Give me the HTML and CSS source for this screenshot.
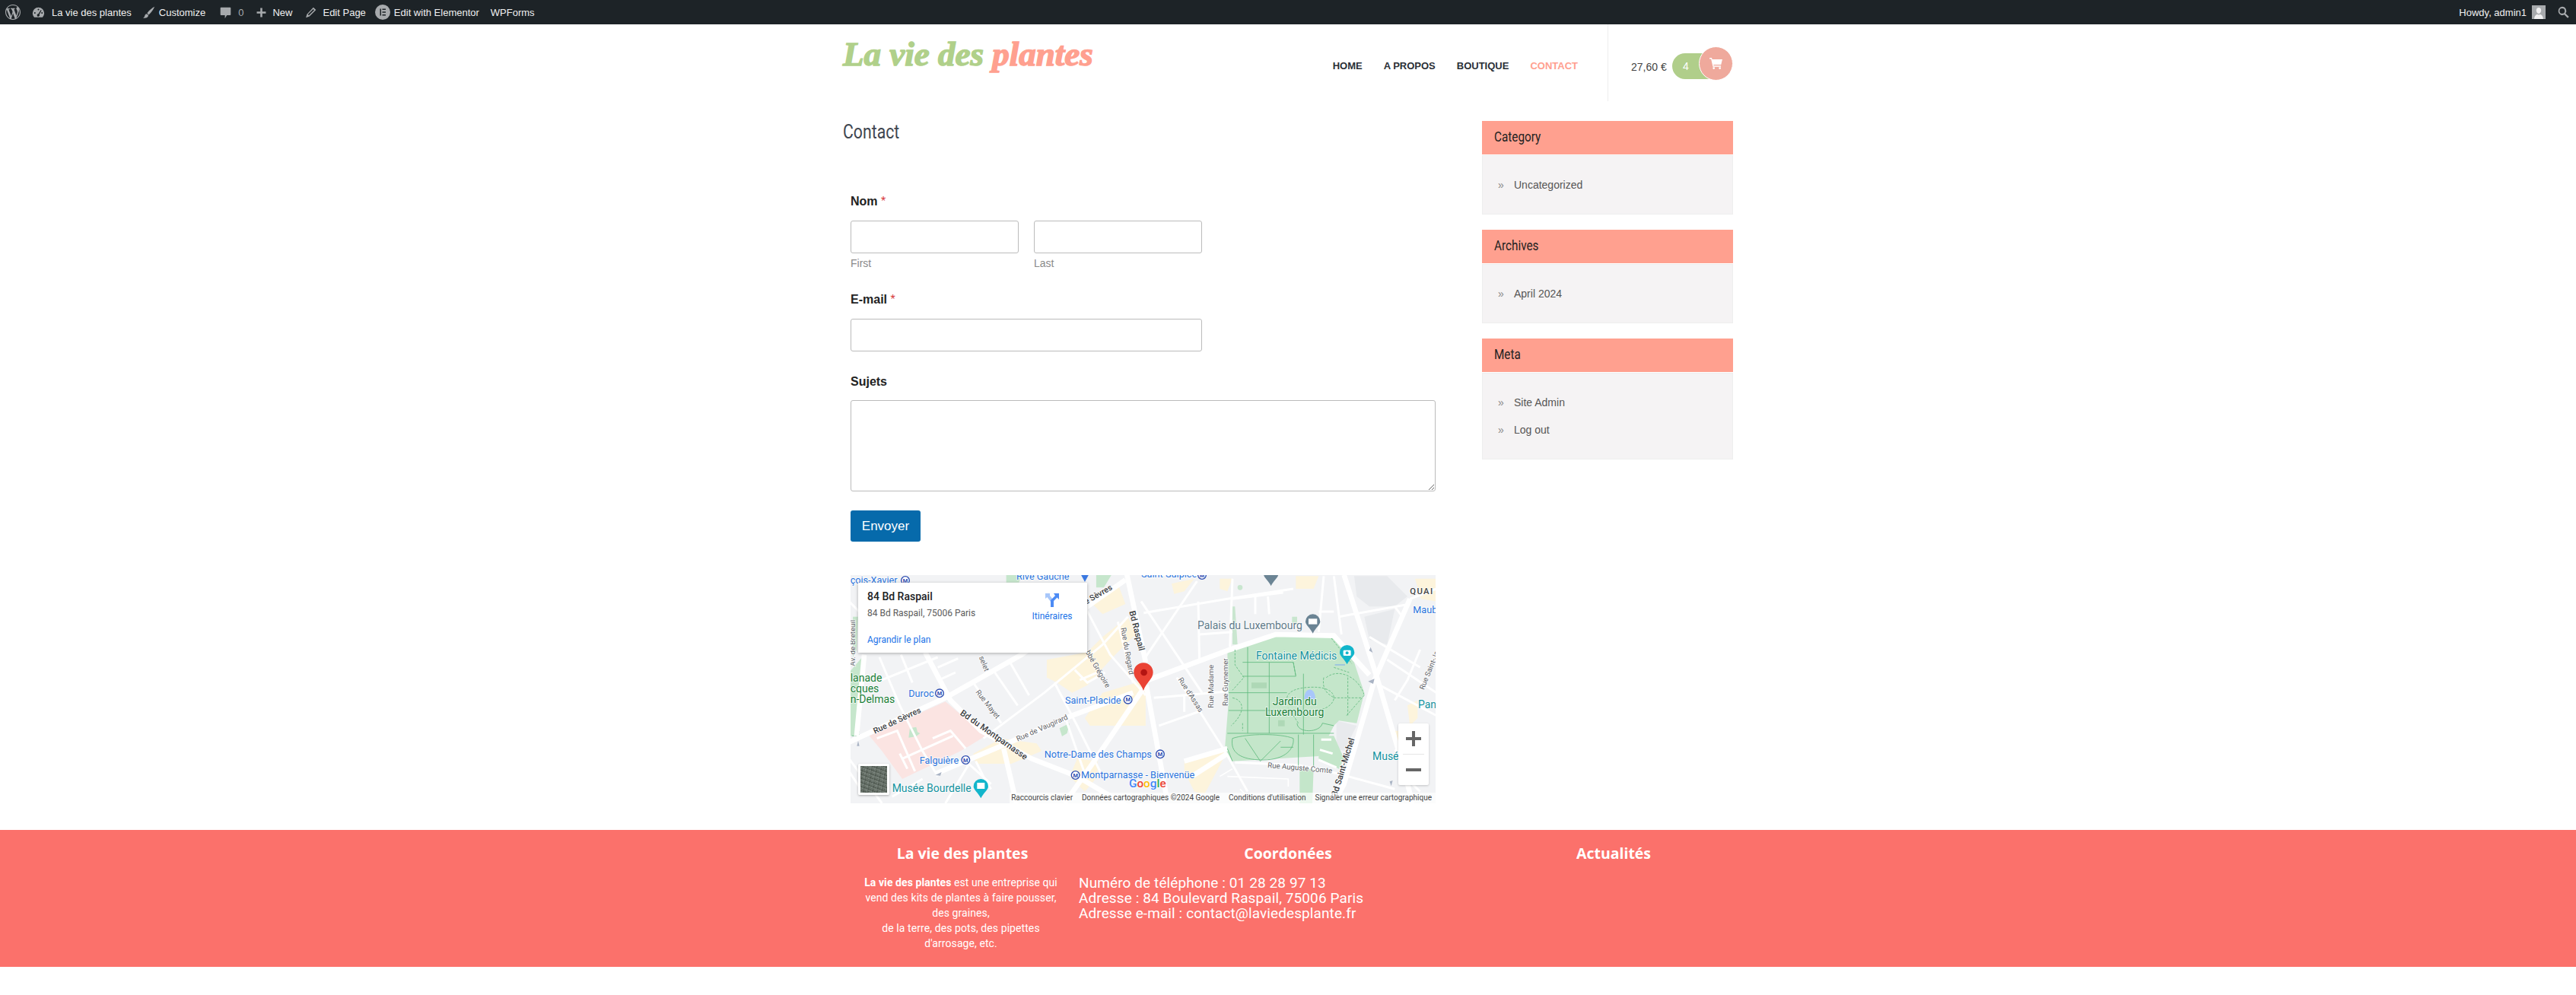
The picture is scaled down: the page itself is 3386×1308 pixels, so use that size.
FILE: index.html
```html
<!DOCTYPE html>
<html lang="fr">

<head>
    <meta charset="UTF-8">
    <meta name="viewport" content="width=device-width, initial-scale=1.0">
    <title>Contact - La vie des plantes</title>
    <link rel="stylesheet" href="styles.css">
</head>

<body>
    <!-- admin bar -->
    <div class="adminbar">
        <svg class="ab-wp" viewBox="0 0 20 20"><path d="M20 10c0-5.51-4.49-10-10-10C4.48 0 0 4.49 0 10c0 5.52 4.48 10 10 10 5.51 0 10-4.48 10-10zM7.78 15.37L4.37 6.22c.55-.02 1.17-.08 1.17-.08.5-.06.44-1.13-.06-1.11 0 0-1.45.11-2.37.11-.18 0-.37 0-.58-.01C4.12 2.69 6.87 1.11 10 1.11c2.33 0 4.45.87 6.05 2.34-.68-.11-1.65.39-1.65 1.58 0 .74.45 1.36.9 2.1.35.61.55 1.36.55 2.46 0 1.49-1.4 5-1.4 5l-3.03-8.37c.54-.02.82-.17.82-.17.5-.05.44-1.25-.06-1.22 0 0-1.44.12-2.38.12-.87 0-2.33-.12-2.33-.12-.5-.03-.56 1.2-.06 1.22l.92.08 1.26 3.41zM17.41 10c.24-.64.74-1.87.43-4.25.7 1.29 1.05 2.71 1.05 4.25 0 3.29-1.73 6.24-4.4 7.78.97-2.59 1.94-5.2 2.92-7.78zM6.1 18.09C3.12 16.65 1.11 13.53 1.11 10c0-1.3.23-2.48.72-3.59C3.25 10.3 4.67 14.2 6.1 18.09zm4.03-6.63l2.58 6.98c-.86.29-1.76.45-2.71.45-.79 0-1.57-.11-2.29-.33.81-2.38 1.62-4.74 2.42-7.1z"/></svg>
        <svg class="ab-icon ab-dash" viewBox="0 0 20 20"><path d="M10 2a9 9 0 0 0-9 9c0 2.5 1 4.700 2.600 6.300h12.800A9 9 0 0 0 19 11a9 9 0 0 0-9-9zm0 2a1.200 1.200 0 1 1 0 2.400A1.200 1.200 0 0 1 10 4zM4.500 9.500a1.200 1.200 0 1 1 0 2.400 1.200 1.200 0 0 1 0-2.400zm11 0a1.200 1.200 0 1 1 0 2.400 1.200 1.200 0 0 1 0-2.400zM13.800 6l1 .7-3.300 6.300a2 2 0 1 1-1.600-.9z"/></svg>
        <span class="ab-text">La vie des plantes</span>
        <svg class="ab-icon ab-brush" viewBox="0 0 20 20"><path d="M19 1c-3 1.500-8 5-11.500 10l2.500 2.500C14 10 17.500 5 19 1zM6.500 12C4 12.500 4 15 3 17c-.3.600-1.200 1-2 1 2.500 1.200 6.500.8 8-2 .5-1 .3-2-.2-2.700z"/></svg>
        <span class="ab-text">Customize</span>
        <svg class="ab-icon ab-comment" viewBox="0 0 20 20"><path d="M3 2h14a1 1 0 0 1 1 1v10a1 1 0 0 1-1 1h-5l-3 5v-5H3a1 1 0 0 1-1-1V3a1 1 0 0 1 1-1z"/></svg>
        <span class="ab-count">0</span>
        <svg class="ab-icon ab-plus" viewBox="0 0 20 20"><path d="M8.500 3h3v5.500H17v3h-5.500V17h-3v-5.500H3v-3h5.500z"/></svg>
        <span class="ab-text">New</span>
        <svg class="ab-icon ab-pencil" viewBox="0 0 20 20"><path d="M14 2l4 4L8 16l-5.500 2L4 12.500zM13.800 4.600L5.500 13l1.500 1.500 8.300-8.400z" fill-rule="evenodd"/></svg>
        <span class="ab-text">Edit Page</span>
        <svg class="ab-el" viewBox="0 0 20 20"><path fill-rule="evenodd" d="M10 0a10 10 0 1 1 0 20 10 10 0 0 1 0-20zM6.500 5.500v9H8v-9zm3 0V7H14V5.500zm0 3.750v1.500H14v-1.500zm0 3.750v1.500H14V13z"/></svg>
        <span class="ab-text">Edit with Elementor</span>
        <span class="ab-text ab-wpforms">WPForms</span>
        <span class="ab-howdy">Howdy, admin1</span>
        <span class="ab-avatar">
            <svg viewBox="0 0 18 18"><path d="M9 3c2 0 3.200 1.500 3.200 3.600S11 11 9 11 5.800 8.700 5.800 6.600 7 3 9 3zM3 18c.3-3.500 2-5.500 4-6.200.6.500 1.300.7 2 .7s1.400-.2 2-.7c2 .7 3.700 2.700 4 6.200z"/></svg>
        </span>
        <svg class="ab-icon ab-search" viewBox="0 0 20 20"><path fill-rule="evenodd" d="M8 1a6.500 6.500 0 0 1 5.200 10.400l5.300 5.100-2 2-5.200-5.200A6.500 6.500 0 1 1 8 1zm0 2.500a4 4 0 1 0 0 8 4 4 0 0 0 0-8z"/></svg>
    </div>

    <div class="wrapper">
        <div class="header">
            <div class="logo">La vie des <span class="logo-pink">plantes</span></div>
            <div class="nav">
                <a href="#">HOME</a>
                <a href="#">A PROPOS</a>
                <a href="#">BOUTIQUE</a>
                <a href="#" class="current">CONTACT</a>
            </div>
            <div class="cart">
                <span class="cart-price">27,60 €</span>
                <div class="cart-pill">
                    <span class="cart-count">4</span>
                    <span class="cart-round">
                        <svg viewBox="0 0 18 16"><path d="M0 0h3.200l.5 2H18l-1.800 7.500H5.500l.4 1.500H16v1.500H4.700L2.200 1.500H0zM6 13a1.500 1.500 0 1 1 0 3 1.500 1.500 0 0 1 0-3zm8.500 0a1.500 1.500 0 1 1 0 3 1.500 1.500 0 0 1 0-3z"/></svg>
                    </span>
                </div>
            </div>
        </div>

        <div class="main">
            <div class="content">
                <h1 class="page-title"><span>Contact</span></h1>

                <form class="contact-form">
                    <div class="field field-name">
                        <label class="label">Nom <em>*</em></label>
                        <div class="name-row">
                            <div>
                                <input type="text" class="input">
                                <div class="sublabel">First</div>
                            </div>
                            <div>
                                <input type="text" class="input">
                                <div class="sublabel">Last</div>
                            </div>
                        </div>
                    </div>
                    <div class="field field-mail">
                        <label class="label">E-mail <em>*</em></label>
                        <input type="text" class="input">
                    </div>
                    <div class="field field-subject">
                        <label class="label">Sujets</label>
                        <textarea class="textarea"></textarea>
                    </div>
                    <button type="button" class="send">Envoyer</button>
                </form>

                <div class="map">
                    <svg class="map-art" viewBox="0 0 769 300">
                        <defs>
                            <g id="metro">
                                <circle r="16" fill="#fff" stroke="#2c4bb0" stroke-width="4"/>
                                <text class="metro-m" text-anchor="middle" y="8">M</text>
                            </g>
                            <path id="drop" d="M0 -30a29 29 0 0 1 29 29c0 14-18 24-29 47c-11-23-29-33-29-47a29 29 0 0 1 29-29z"/>
                        </defs>
                        <rect width="769" height="300" fill="#f2f3f5"/>

                        <!-- left half -->
                        <g transform="translate(-2 -2) scale(.3333)">
                            <g fill="#fdf4dc">
                                <path d="M780 340l160-30 60-60 100-80 30 70-90 90-100 110-60 30-60-40-40-20z"/>
                                <path d="M960 120l100-80 30 80-90 40z"/>
                                <path d="M1000 470l100-30 70-20v180H950l-20-30z"/>
                                <path d="M490 710l110-60 140 20 20 30-120 50-140 0z"/>
                                <path d="M900 730l80 10v60l-50 60-60-60z"/>
                            </g>
                            <path fill="#fbe4e2" d="M80 640l300-135 160 135-100 60-230 110-80-110z"/>
                            <g fill="#c6e6cc">
                                <path d="M0 390l60-70-25 320H0z"/>
                                <path d="M15 170h20l-5 130-15 30z"/>
                                <path d="M620 5h60l-10 30h-50z"/>
                                <path d="M975 5h60l-30 50-30 0z"/>
                                <path d="M240 610l25-5 5 20 10 5-15 12-30 5zM830 610l40-20-10 40-20 12z"/>
                            </g>
                            <path class="paths dashed" d="M40 520v120H8"/>
                            <g class="road road-big">
                                <path d="M0 665L380 490 680 320 940 130 1090 25"/>
                                <path d="M300 310l100 190 120 120 200 110 180 70 270 160"/>
                                <path d="M1095 0l75 350"/>
                                <path d="M60 320L30 640"/>
                                <path d="M340 790l260-110 280-120 240-90"/>
                                <path d="M1170 440L960 750 850 906"/>
                                <path d="M610 690l50 216"/>
                            </g>
                            <g class="road">
                                <path d="M120 330l80 190 90 180 60 100"/>
                                <path d="M205 320l45 110"/>
                                <path d="M130 420l220-90M350 370l80-35M355 420l65-30"/>
                                <path d="M490 430l110 160M575 390l90 130M635 350l75 130"/>
                                <path d="M530 650l240-180 230-190 100-110"/>
                                <path d="M810 430l90 170 100 200"/>
                                <path d="M930 130l100 190 140 160"/>
                                <path d="M1060 190l60 240"/>
                                <path d="M0 730l130 176"/>
                                <path d="M110 650l80-30 70 160M210 730l200-90M330 650l70-30 60 70M200 710l30 60"/>
                                <path d="M450 730l110 100M380 906l90-150"/>
                                <path d="M890 380l50 50 70-40M910 420l70-30"/>
                                <path d="M0 110l60 60M0 780l40 60M170 880l120-70"/>
                                <path d="M850 560l80 230M500 740l40 80 20 30"/>
                            </g>
                            <path d="M36 660l5 20h-10z" fill="#a9b3c4"/>
                            <path d="M340 795l25-12-5 14z" fill="#a9b3c4"/>

                            <text class="lbl blue" x="5" y="40">çois-Xavier</text>
                            <use href="#metro" x="222" y="27"/>
                            <text class="lbl blue" x="660" y="25">Rive Gauche</text>
                            <path d="M915 5h30l-15 28z" fill="#3a78e0"/>
                            <text class="lbl blue" x="235" y="485">Duroc</text>
                            <use href="#metro" x="357" y="472"/>
                            <text class="lbl blue" x="278" y="750">Falguière</text>
                            <use href="#metro" x="460" y="735"/>
                            <text class="lbl teal" x="170" y="862">Musée Bourdelle</text>
                            <use href="#drop" x="520" y="840" fill="#12b5cb"/>
                            <rect x="505" y="825" width="30" height="24" fill="#fff"/>
                            <text class="lbl green" x="5" y="425">lanade</text>
                            <text class="lbl green" x="5" y="467">cques</text>
                            <text class="lbl green" x="5" y="509">n-Delmas</text>
                            <text class="lbl dark sevres" transform="translate(102 632) rotate(-25)">Rue de Sèvres</text>
                            <text class="lbl dark sevres" transform="translate(935 122) rotate(-30)">e Sèvres</text>
                            <text class="lbl dark" transform="translate(436 555) rotate(35)">Bd du Montparnasse</text>
                            <text class="lbl dark" transform="translate(1105 150) rotate(76)">Bd Raspail</text>
                            <text class="lbl small" transform="translate(1072 215) rotate(80)">Rue du Regard</text>
                            <text class="lbl small" transform="translate(932 310) rotate(60)">bbé Grégoire</text>
                            <text class="lbl small" transform="translate(498 468) rotate(52)">Rue Mayet</text>
                            <text class="lbl small" transform="translate(665 662) rotate(-24)">Rue de Vaugirard</text>
                            <text class="lbl small" transform="translate(512 330) rotate(68)">selet</text>
                            <text class="lbl small" transform="translate(24 365) rotate(-90)">Av. de Breteuil</text>
                        </g>

                        <!-- right half -->
                        <g transform="translate(382 -2) scale(.3333)">
                            <g fill="#fdf4dc">
                                <path d="M120 40l90-20-40 50-40 10z"/>
                                <path d="M310 20h50l-20 50-30-10z"/>
                                <path d="M610 10h90l-20 50h-70z"/>
                                <path d="M1050 520l40-20v70l-30 30z"/>
                                <path d="M1000 620h40l-30 70z"/>
                                <path d="M170 740l170-40-90 170-40-10-40-80z"/>
                                <path d="M1080 20h84v90l-60-10z"/>
                            </g>
                            <g fill="#e8eaed">
                                <path d="M840 10h130l80 80-50 40H900l-50-40z"/>
                                <path d="M880 170l120-30-30 140-70-20z"/>
                                <path d="M770 580l80 20-50 100-30-10z"/>
                            </g>
                            <path fill="#c4e6ca" d="M340 310L560 240H750L840 350 880 470 850 590 780 580 760 600 700 720 360 740 330 690 345 500z"/>
                            <path fill="#c4e6ca" d="M625 770h55l-5 136h-50z"/>
                            <path fill="#c4e6ca" d="M700 640h60l40 90-20 40-80-40z"/>
                            <path fill="#c9e6cf" d="M360 130h10l10 150h-20zM380 55a10 10 0 1 0 20 0 10 10 0 0 0-20 0zM595 170h20v30h-20z"/>
                            <path fill="#aed8b6" d="M435 430h60v22h-60zM540 578h26v24h-26z"/>
                            <g class="road road-big">
                                <path d="M0 430L350 300 530 240 760 245 900 400"/>
                                <path d="M20 440l80 440"/>
                                <path d="M800 5l130 405 100 340 40 156"/>
                                <path d="M1060 100L920 420 800 830 760 906"/>
                                <path d="M170 740L340 690M200 800L340 710"/>
                            </g>
                            <g class="road">
                                <path d="M10 340L220 30"/>
                                <path d="M0 110l120 180 120 180"/>
                                <path d="M140 410l95 140 95 150 90 160"/>
                                <path d="M225 110l5 240M360 20l-10 270"/>
                                <path d="M10 155l330-55 260-40M360 100l200-25M450 90v70M500 90l5 70M230 240l130-10"/>
                                <path d="M720 10l-20 220M760 10l30 230M700 150h60"/>
                                <path d="M780 170l280-50M1060 100l104-40"/>
                                <path d="M900 250l200 120M940 440l224 120M970 340l194 130"/>
                                <path d="M1100 300l-50 120-50 80"/>
                                <path d="M370 745l250 10 160 35 220 60"/>
                                <path d="M50 490l290-25M170 480v65M70 600l170-60"/>
                                <path d="M710 655h40M705 695l50 15M700 735l70 30"/>
                                <path d="M1000 130l30 40M1100 860l-60-60M1000 700l100-60"/>
                            </g>
                            <path class="road thin" d="M340 800l240 10v30M390 850l40 40M310 800l50-30"/>

                            <!-- allees du jardin -->
                            <g class="paths">
                                <path d="M420 290v340M505 350v280M640 395v240M400 350h200M400 405h210l-10-55M345 470h230M345 540h240M340 630h420M620 635v130M680 635v130"/>
                                <path d="M360 650c60-20 190-20 240 0 5 40-30 85-120 85-90 0-130-30-120-85z"/>
                                <path d="M410 650l60 90M550 660l-80 80M550 685h50M360 740l-20-50"/>
                                <path d="M615 590c0 40 90 40 100 0l45 10"/>
                            </g>
                            <g class="paths dashed">
                                <path d="M370 300v60l35 50-45 50M360 490c50 10 50 60-5 110M400 590v30"/>
                                <path d="M575 490c5-30 50-42 105-42s80 20 80 42-30 50-80 50"/>
                                <path d="M620 590l-40-60M760 490h110M815 410v150M730 410c50-40 130 0 150 70M880 480l-70 80"/>
                                <path d="M750 255l80 100M760 370l60 20M720 410c-10 60 30 70 40 80M600 350l10 55"/>
                            </g>
                            <path fill="#a8c7fa" d="M643 495c0-50 44-50 44 0z"/>
                            <path d="M764 360h40" stroke="#7aa7ee" stroke-width="3"/>
                            <path d="M905 290l8 22-14-8zM895 425l25-10-5 20zM980 820l12-4-6 22z" fill="#a9b3c4"/>

                            <text class="lbl slate" x="222" y="218">Palais du Luxembourg</text>
                            <use href="#drop" x="677" y="190" fill="#6b8494"/>
                            <rect x="660" y="178" width="34" height="22" fill="#fff"/>
                            <use href="#drop" x="512" y="3" fill="#6b8494"/>
                            <text class="lbl teal" x="453" y="338">Fontaine Médicis</text>
                            <use href="#drop" x="812" y="312" fill="#12b5cb"/>
                            <rect x="797" y="302" width="30" height="22" rx="4" fill="#fff"/>
                            <circle cx="812" cy="313" r="6" fill="#12b5cb"/>
                            <text class="lbl green mid" x="605" y="520">Jardin du</text>
                            <text class="lbl green mid" x="605" y="562">Luxembourg</text>
                            <text class="lbl small" transform="translate(145 418) rotate(57)">Rue d'Assas</text>
                            <text class="lbl small" transform="translate(284 530) rotate(-90)">Rue Madame</text>
                            <text class="lbl small" transform="translate(343 522) rotate(-90)">Rue Guynemer</text>
                            <text class="lbl small" transform="translate(498 765) rotate(5)">Rue Auguste Comte</text>
                            <text class="lbl dark" transform="translate(772 880) rotate(-73)">3d Saint-Michel</text>
                            <text class="lbl quai" x="1060" y="80">QUAI</text>
                            <text class="lbl blue" x="1072" y="155">Maub</text>
                            <text class="lbl teal" x="1092" y="532">Pan</text>
                            <text class="lbl teal" x="912" y="735">Musée</text>
                            <text class="lbl small" transform="translate(1115 460) rotate(-68)">Rue Saint-Jacques</text>
                            <text class="lbl blue" x="0" y="15">Saint-Sulpice</text>
                            <use href="#metro" x="240" y="6"/>
                        </g>

                        <!-- labels that cross both halves, on top of the roads -->
                        <g transform="translate(-2 -2) scale(.3333)">
                            <text class="lbl blue" x="852" y="512">Saint-Placide</text>
                            <use href="#metro" x="1100" y="497"/>
                            <text class="lbl blue" x="770" y="725">Notre-Dame des Champs</text>
                            <use href="#metro" x="1227" y="712"/>
                            <use href="#metro" x="893" y="795"/>
                            <text class="lbl blue" x="915" y="808">Montparnasse - Bienvenüe</text>
                            <text class="google" x="1104" y="842"><tspan fill="#4285f4">G</tspan><tspan fill="#ea4335">o</tspan><tspan fill="#fbbc05">o</tspan><tspan fill="#4285f4">g</tspan><tspan fill="#34a853">l</tspan><tspan fill="#ea4335">e</tspan></text>
                            <!-- marker -->
                            <path fill="#ea4335" d="M1161 352c22 0 38 17 38 38 0 26-28 40-38 72-10-32-38-46-38-72 0-21 16-38 38-38z"/>
                            <circle cx="1163" cy="390" r="13" fill="#b31412"/>
                        </g>
                    </svg>

                    <div class="map-card">
                        <div class="map-card-text">
                            <div class="map-place">84 Bd Raspail</div>
                            <div class="map-address">84 Bd Raspail, 75006 Paris</div>
                            <a href="#" class="map-link">Agrandir le plan</a>
                        </div>
                        <div class="map-route">
                            <svg viewBox="0 0 20 20"><path fill="#a8c7fa" d="M1 1h6v3l5 6v9H8v-7L3.500 6 1 8z"/><path fill="#4c8bf5" d="M19 1v8l-2.500-2.500L12 11v8H8v-9l6-6-2-3z"/></svg>
                            <a href="#" class="map-link">Itinéraires</a>
                        </div>
                    </div>
                    <div class="map-thumb"></div>
                    <div class="map-zoom">
                        <svg viewBox="0 0 40 40"><path d="M18 10h4v8h8v4h-8v8h-4v-8h-8v-4h8z"/></svg>
                        <i></i>
                        <svg viewBox="0 0 40 40"><path d="M10 18h20v4H10z"/></svg>
                    </div>
                    <div class="map-credits">
                        <span>Raccourcis clavier</span>
                        <span>Données cartographiques ©2024 Google</span>
                        <span>Conditions d'utilisation</span>
                        <span>Signaler une erreur cartographique</span>
                    </div>
                </div>
            </div>

            <div class="sidebar">
                <div class="widget">
                    <h3 class="widget-title"><span>Category</span></h3>
                    <ul class="widget-list">
                        <li><a href="#">Uncategorized</a></li>
                    </ul>
                </div>
                <div class="widget">
                    <h3 class="widget-title"><span>Archives</span></h3>
                    <ul class="widget-list">
                        <li><a href="#">April 2024</a></li>
                    </ul>
                </div>
                <div class="widget">
                    <h3 class="widget-title"><span>Meta</span></h3>
                    <ul class="widget-list">
                        <li><a href="#">Site Admin</a></li>
                        <li><a href="#">Log out</a></li>
                    </ul>
                </div>
            </div>
        </div>
    </div>

    <div class="footer">
        <div class="footer-inner">
            <div class="footer-col footer-col-first">
                <h4 class="footer-title">La vie des plantes</h4>
                <p class="footer-about"><b>La vie des plantes</b> est une entreprise qui<br>vend des kits de plantes à faire pousser,<br>des graines,<br>de la terre, des pots, des pipettes<br>d'arrosage, etc.</p>
            </div>
            <div class="footer-col">
                <h4 class="footer-title">Coordonées</h4>
                <p class="footer-contact">Numéro de téléphone : 01 28 28 97 13<br>Adresse : 84 Boulevard Raspail, 75006 Paris<br>Adresse e-mail : contact@laviedesplante.fr</p>
            </div>
            <div class="footer-col footer-col-last">
                <h4 class="footer-title">Actualités</h4>
            </div>
        </div>
    </div>
</body>

</html>
```

FILE: styles.css
```css
* {
    box-sizing: border-box;
}

body {
    margin: 0;
    background: white;
    font-family: "Liberation Sans", Arial, sans-serif;
    color: #444;
}

a {
    text-decoration: none;
    color: inherit;
}

/* admin bar */
.adminbar {
    height: 32px;
    background: #1d2327;
    display: flex;
    align-items: center;
    color: #f0f0f1;
    font-size: 13px;
}

.adminbar svg {
    fill: #a7aaad;
    flex: none;
}

.ab-wp {
    width: 20px;
    height: 20px;
    margin-left: 7px;
}

.ab-icon {
    width: 17px;
    height: 17px;
}

.ab-dash {
    margin-left: 15px;
    margin-right: 9px;
}

.ab-brush {
    margin-left: 14px;
    margin-right: 5px;
}

.ab-comment {
    margin-left: 18px;
    margin-right: 8px;
}

.ab-count {
    color: #a7aaad;
}

.ab-plus {
    margin-left: 15px;
    margin-right: 6px;
}

.ab-pencil {
    margin-left: 16px;
    margin-right: 7px;
}

.ab-el {
    width: 20px;
    height: 20px;
    margin-left: 12px;
    margin-right: 5px;
}

.ab-wpforms {
    margin-left: 15px;
}

.ab-howdy {
    margin-left: auto;
    margin-right: 7px;
}

.ab-avatar {
    width: 18px;
    height: 18px;
    background: #a7aaad;
    display: block;
}

.adminbar .ab-avatar svg {
    display: block;
    width: 18px;
    height: 18px;
    fill: #f0f0f1;
}

.ab-search {
    margin-left: 15px;
    margin-right: 8px;
}

/* header */
.wrapper {
    width: 1170px;
    margin: 0 auto;
}

.header {
    height: 101px;
    display: flex;
}

.logo {
    font-family: "Liberation Serif", serif;
    font-weight: bold;
    font-style: italic;
    font-size: 45px;
    line-height: 50px;
    margin-top: 14px;
    height: 50px;
    color: #b0d08a;
    -webkit-text-stroke: 1.5px currentColor;
    white-space: nowrap;
}

.logo-pink {
    color: #ffa08f;
}

.nav {
    margin-left: auto;
    margin-right: 39px;
    padding-top: 48px;
    display: flex;
    gap: 28px;
    font-size: 13px;
    line-height: 14px;
    font-weight: bold;
    color: #2a2f36;
}

.nav .current {
    color: #ffa08f;
}

.cart {
    width: 165px;
    border-left: 1px solid #eee;
    display: flex;
    align-items: flex-start;
    padding: 29px 0 0 30px;
}

.cart-price {
    font-size: 14px;
    margin-top: 19px;
    width: 54px;
    white-space: nowrap;
}

.cart-pill {
    width: 52px;
    height: 34px;
    margin-top: 9px;
    background: #b0ce8a;
    border-radius: 17px 0 0 17px;
    position: relative;
    color: white;
    font-size: 14px;
    line-height: 34px;
    padding-left: 14px;
}

.cart-round {
    position: absolute;
    left: 35px;
    top: -9px;
    width: 45px;
    height: 45px;
    border-radius: 50%;
    background: #efa99c;
    border: 1px solid white;
    display: flex;
    align-items: center;
    justify-content: center;
}

.cart-round svg {
    width: 17px;
    height: 15px;
    fill: white;
}

/* main */
.main {
    padding-top: 26px;
    display: flex;
    justify-content: space-between;
}

.content {
    width: 790px;
}

.page-title {
    margin: 0;
    padding-top: 2px;
    font-family: Roboto, sans-serif;
    font-weight: normal;
    font-size: 25px;
    line-height: 26px;
    color: #3f4650;
}

.page-title span,
.widget-title span {
    display: inline-block;
    transform: scaleX(.85);
    transform-origin: left;
}

.contact-form {
    margin: 68px 0 0 10px;
    width: 769px;
}

.label {
    display: block;
    font-weight: bold;
    font-size: 16px;
    line-height: 20px;
    color: #222;
    margin-bottom: 15px;
}

.label em {
    font-style: normal;
    font-weight: normal;
    color: #d63637;
}

.field-name {
    margin-bottom: 29px;
}

.field-mail {
    margin-bottom: 30px;
    width: 462px;
}

.field-subject .label {
    margin-bottom: 14px;
}

.name-row {
    display: grid;
    grid-template-columns: 221px 221px;
    gap: 20px;
}

.input {
    display: block;
    width: 100%;
    height: 43px;
    border: 1px solid #bbb;
    border-radius: 3px;
    background: white;
}

.textarea {
    display: block;
    width: 100%;
    height: 120px;
    border: 1px solid #bbb;
    border-radius: 3px;
}

.sublabel {
    margin-top: 4px;
    font-size: 14px;
    line-height: 18px;
    color: #8a8a8a;
}

.send {
    display: block;
    margin-top: 25px;
    width: 92px;
    height: 41px;
    border: 0;
    border-radius: 3px;
    background: #066aab;
    color: white;
    font-family: "Liberation Sans", Arial, sans-serif;
    font-size: 17px;
}

/* map */
.map {
    position: relative;
    margin: 44px 0 0 10px;
    width: 769px;
    height: 300px;
    overflow: hidden;
}

.map-art {
    display: block;
    width: 769px;
    height: 300px;
}

.road {
    fill: none;
    stroke: white;
    stroke-width: 9;
}

.road-big {
    stroke-width: 20;
}

.thin {
    stroke: #fff;
    stroke-width: 5;
}

.paths {
    fill: none;
    stroke: #5fb97d;
    stroke-width: 2.5;
}

.dashed {
    stroke-dasharray: 9 5;
}

.lbl {
    font-family: Roboto, sans-serif;
    font-size: 38px;
    paint-order: stroke;
    stroke: white;
    stroke-width: 5px;
    stroke-opacity: .8;
}

.blue {
    fill: #2a74dc;
}

.teal {
    fill: #12929f;
    font-size: 42px;
}

.green {
    fill: #188038;
    font-size: 42px;
}

.slate {
    fill: #5f7a8a;
    font-size: 42px;
}

.mid {
    text-anchor: middle;
}

.dark {
    font-size: 34px;
    font-weight: 500;
    fill: #3c4043;
}

.sevres {
    font-size: 32px;
}

.small {
    font-size: 29px;
    fill: #5f6368;
}

.quai {
    font-size: 34px;
    font-weight: 500;
    letter-spacing: 4px;
    fill: #444;
}

.metro-m {
    font-family: Roboto, sans-serif;
    font-weight: bold;
    font-size: 22px;
    fill: #2c4bb0;
}

.google {
    font-family: Roboto, sans-serif;
    font-weight: 500;
    font-size: 46px;
    paint-order: stroke;
    stroke: white;
    stroke-width: 4px;
}

.map-card {
    position: absolute;
    left: 10px;
    top: 10px;
    width: 301px;
    height: 92px;
    background: white;
    box-shadow: 0 1px 4px rgba(0, 0, 0, .3);
    display: flex;
    font-family: Roboto, sans-serif;
}

.map-card-text {
    padding: 10px 0 0 12px;
    flex: 1;
}

.map-place {
    font-size: 14px;
    line-height: 16px;
    font-weight: 500;
    color: #202124;
}

.map-address {
    margin-top: 6px;
    font-size: 12px;
    line-height: 16px;
    color: #5b5b5b;
}

.map-card .map-link {
    display: block;
    font-size: 12px;
    line-height: 14px;
    color: #1a73e8;
}

.map-card-text .map-link {
    margin-top: 20px;
}

.map-route {
    width: 76px;
    margin-right: 8px;
    padding-top: 13px;
    text-align: center;
}

.map-route svg {
    display: block;
    width: 20px;
    height: 20px;
    margin: 0 auto 4px;
}

.map-thumb {
    position: absolute;
    left: 10px;
    top: 248px;
    width: 41px;
    height: 41px;
    border: 3px solid white;
    border-radius: 2px;
    box-shadow: 0 1px 3px rgba(0, 0, 0, .3);
    background:
        repeating-linear-gradient(20deg, rgba(60, 70, 60, .5) 0, rgba(150, 160, 150, .35) 1px, rgba(50, 60, 50, .45) 3px, rgba(130, 140, 130, .3) 5px),
        repeating-linear-gradient(100deg, #5d675f 0, #848e88 2px, #565f58 3px, #7a847c 6px);
}

.map-zoom {
    position: absolute;
    right: 9px;
    top: 195px;
    width: 40px;
    height: 81px;
    background: white;
    border-radius: 2px;
    box-shadow: 0 1px 3px rgba(0, 0, 0, .2);
    display: flex;
    flex-direction: column;
}

.map-zoom svg {
    display: block;
    width: 40px;
    height: 40px;
    fill: #666;
}

.map-zoom i {
    display: block;
    height: 1px;
    margin: 0 6px;
    background: #e6e6e6;
}

.map-credits {
    position: absolute;
    right: 0;
    bottom: 0;
    height: 14px;
    padding: 0 5px 0 2px;
    display: flex;
    gap: 12px;
    background: rgba(255, 255, 255, .7);
    font-family: Roboto, sans-serif;
    font-size: 10px;
    line-height: 14px;
    color: #444;
    white-space: nowrap;
}

/* sidebar */
.sidebar {
    width: 330px;
}

.widget {
    margin-bottom: 20px;
}

.widget-title {
    margin: 0;
    height: 44px;
    padding: 9px 16px 0;
    background: #ffa08f;
    font-family: Roboto, sans-serif;
    font-weight: normal;
    font-size: 18px;
    line-height: 24px;
    color: #222;
}

.widget-list {
    list-style: none;
    margin: 1px 0 0;
    padding: 20px 20px 20px;
    background: #f5f3f4;
    border: 1px solid #eee;
    font-size: 14px;
    line-height: 36px;
    color: #555;
}

.widget-list li::before {
    content: "»";
    display: inline-block;
    width: 21px;
    color: #888;
}

/* footer */
.footer {
    margin-top: 35px;
    height: 180px;
    background: #fb716b;
    color: white;
}

.footer-inner {
    width: 1170px;
    margin: 0 auto;
    display: grid;
    grid-template-columns: 310px 550px 310px;
}

.footer-col-first .footer-title {
    padding-left: 4px;
}

.footer-col-last .footer-title {
    padding-right: 4px;
}

.footer-title {
    margin: 0;
    padding-top: 17px;
    font-family: "Open Sans", sans-serif;
    font-weight: bold;
    font-size: 19.5px;
    line-height: 27px;
    text-align: center;
}

.footer-about {
    margin: 15px 0 0;
    font-family: Roboto, sans-serif;
    font-size: 14px;
    line-height: 20px;
    letter-spacing: .08px;
    text-align: center;
}

.footer-contact {
    margin: 16px 0 0;
    font-family: Roboto, sans-serif;
    font-size: 19px;
    line-height: 20px;
    letter-spacing: .1px;
}
```
